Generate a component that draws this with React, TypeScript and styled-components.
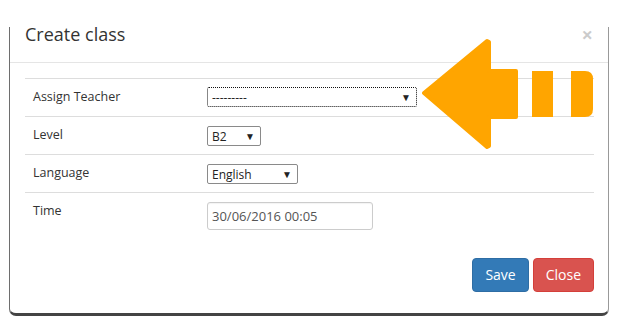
import React from "react";
import styled, { createGlobalStyle } from "styled-components";

const Global = createGlobalStyle`
  html, body { margin: 0; padding: 0; background: #fff; }
  body { font-family: "Open Sans", "Noto Sans", sans-serif; color: #333; }
  * { box-sizing: border-box; }
`;

const Page = styled.div`
  width: 621px;
  height: 328px;
  padding: 7px 0 0 9px;
  overflow: hidden;
`;

const Modal = styled.div`
  position: relative;
  width: 600px;
  height: 309px;
  background: #fff;
  border-radius: 6px;
  display: flex;
  flex-direction: column;
  &::before {
    content: "";
    position: absolute;
    left: 0;
    right: 0;
    top: 20px;
    bottom: 0;
    border-left: 1px solid #6e6e6e;
    border-right: 1px solid #999;
    border-bottom: 3px solid #444;
    border-radius: 0 0 7px 7px;
    pointer-events: none;
  }
`;

const Header = styled.div`
  height: 56px;
  padding: 15px 15px 0 16px;
  border-bottom: 1px solid #e5e5e5;
  display: flex;
  justify-content: space-between;
  align-items: flex-start;
`;

const Title = styled.h4`
  margin: 0;
  font-size: 18px;
  font-weight: 400;
  line-height: 24px;
  color: #333;
`;

const CloseX = styled.span`
  font-size: 20px;
  font-weight: 700;
  line-height: 1;
  color: #000;
  opacity: 0.2;
  margin-top: 3px;
  margin-right: 1px;
`;

const Body = styled.div`
  padding: 15px 15px 0 16px;
`;

const Table = styled.div`
  display: grid;
  grid-template-columns: 174px 1fr;
  border-top: 1px solid #ddd;
`;

const Row = styled.div<{ $last?: boolean }>`
  display: contents;
  & > div {
    height: ${(p) => (p.$last ? "45px" : "38px")};
    border-bottom: ${(p) => (p.$last ? "none" : "1px solid #ddd")};
  }
`;

const LabelCell = styled.div`
  padding: 8px 8px 0 8px;
  font-size: 12.5px;
  line-height: 20px;
  color: #333;
`;

const ControlCell = styled.div`
  padding: 8px 8px 0 8px;
  display: flex;
  align-items: flex-start;
`;

const Select = styled.div<{ $w: number; $focus?: boolean }>`
  width: ${(p) => p.$w}px;
  height: 20px;
  border: 1px ${(p) => (p.$focus ? "dotted #111" : "solid #8a8a8a")};
  border-radius: 2px;
  background: #fff;
  display: flex;
  align-items: center;
  justify-content: space-between;
  padding: 0 5px 0 4px;
  font-size: 12px;
  color: #222;
  margin-top: ${(p) => (p.$focus ? "0px" : "1px")};
`;

const Caret = styled.span`
  font-size: 10px;
  color: #222;
  line-height: 1;
`;

const Input = styled.div`
  width: 166px;
  height: 28px;
  border: 1px solid #ccc;
  border-radius: 3px;
  padding: 0 4px;
  display: flex;
  align-items: center;
  font-size: 13px;
  color: #555;
  margin-top: 1px;
  box-shadow: inset 0 1px 1px rgba(0,0,0,0.05);
`;

const Footer = styled.div`
  display: flex;
  justify-content: flex-end;
  gap: 4px;
  padding: 20px 15px 0 15px;
`;

const Button = styled.button<{ $bg: string; $border: string }>`
  height: 34px;
  padding: 0 12px;
  font-family: "Open Sans", "Noto Sans", sans-serif;
  font-size: 14px;
  line-height: 20px;
  color: #fff;
  background: ${(p) => p.$bg};
  border: 1px solid ${(p) => p.$border};
  border-radius: 4px;
`;

const ArrowSvg = styled.svg`
  position: absolute;
  left: 411px;
  top: 30px;
`;

const Arrow = () => (
  <ArrowSvg width="176" height="116" viewBox="-1 -1 176 116">
    <g fill="#FFA500" stroke="#FFA500" strokeLinejoin="round" strokeWidth="4">
      <path d="M3 55 L66 3 L68 4 L68 33 L95 33 L95 79 L68 79 L68 108 L66 109 Z" />
    </g>
    <rect x="111" y="33" width="21" height="46" fill="#FFA500" />
    <path d="M150 33 L164 33 Q172 33 172 41 L172 71 Q172 79 164 79 L150 79 Z" fill="#FFA500" />
  </ArrowSvg>
);

export default function App() {
  return (
    <Page>
      <Global />
      <Modal>
        <Header>
          <Title>Create class</Title>
          <CloseX>×</CloseX>
        </Header>
        <Body>
          <Table>
            <Row>
              <LabelCell>Assign Teacher</LabelCell>
              <ControlCell>
                <Select $w={210} $focus>
                  <span>---------</span>
                  <Caret>▼</Caret>
                </Select>
              </ControlCell>
            </Row>
            <Row>
              <LabelCell>Level</LabelCell>
              <ControlCell>
                <Select $w={54}>
                  <span>B2</span>
                  <Caret>▼</Caret>
                </Select>
              </ControlCell>
            </Row>
            <Row>
              <LabelCell>Language</LabelCell>
              <ControlCell>
                <Select $w={91}>
                  <span>English</span>
                  <Caret>▼</Caret>
                </Select>
              </ControlCell>
            </Row>
            <Row $last>
              <LabelCell>Time</LabelCell>
              <ControlCell>
                <Input>30/06/2016 00:05</Input>
              </ControlCell>
            </Row>
          </Table>
        </Body>
        <Footer>
          <Button $bg="#337ab7" $border="#2e6da4">Save</Button>
          <Button $bg="#d9534f" $border="#d43f3a">Close</Button>
        </Footer>
        <Arrow />
      </Modal>
    </Page>
  );
}
